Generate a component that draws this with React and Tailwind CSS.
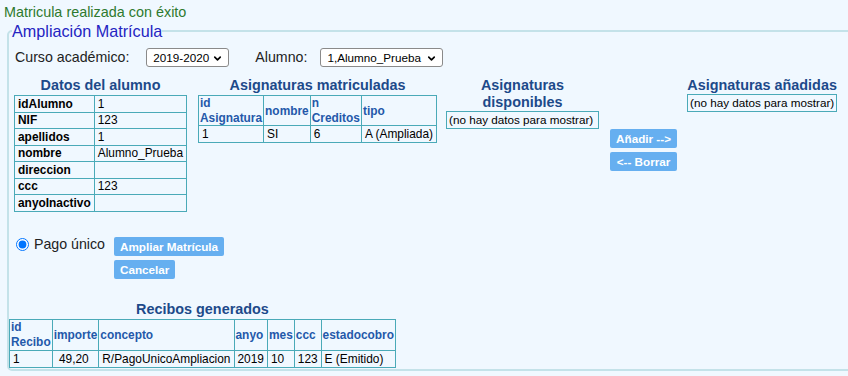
import { ChevronDown } from 'lucide-react';

const th = 'border border-[#4aaab8] px-[1px] py-0 text-left font-bold text-[#2458aa] align-middle';
const td = 'border border-[#4aaab8] px-[3px] py-0 text-left whitespace-nowrap';
const heading = 'text-center font-bold text-[14.4px] leading-[17px] text-[#1d4a8a]';

const Select = ({ value, width }) => (
    <div className={`relative flex items-center h-[19px] bg-white border border-[#8a8a8a] rounded-[3px] text-[11.7px] text-black pl-[6px] ${width}`}>
        <span>{value}</span>
        <ChevronDown size={11} strokeWidth={3.5} className="absolute right-[5px] top-[4px]" />
    </div>
);

const Boton = ({ children, className = '' }) => (
    <button
        type="button"
        className={`h-[19px] bg-[#66aff0] text-white font-bold text-[11.7px] rounded-[2px] px-[6px] leading-[19px] ${className}`}
    >
        {children}
    </button>
);

const alumno = [
    ['idAlumno', '1'],
    ['NIF', '123'],
    ['apellidos', '1'],
    ['nombre', 'Alumno_Prueba'],
    ['direccion', ''],
    ['ccc', '123'],
    ['anyoInactivo', ''],
];

const App = () => {
    return (
        <div className="w-full min-h-screen overflow-hidden bg-[#f0f8ff] font-['Liberation_Sans',Arial,sans-serif] text-[#222]">
            <div className="pl-[4px] pt-[4px] h-[22px] text-[14.4px] leading-[17px] text-[#2e7a2e]">
                Matricula realizada con éxito
            </div>
            <fieldset className="ml-[7px] w-[900px] border-2 border-[#c4e2e9] rounded-[5px] pb-[1px]">
                <legend className="ml-[3px] text-[16.2px] leading-[18px] text-[#2424c2]">Ampliación Matrícula</legend>

                <div className="flex items-center pl-[6px] mt-[7px] text-[14.2px]">
                    <span>Curso académico:</span>
                    <Select value="2019-2020" width="w-[83px] ml-[17px]" />
                    <span className="ml-[26px]">Alumno:</span>
                    <Select value="1,Alumno_Prueba" width="w-[123px] ml-[13px]" />
                </div>

                <div className="flex items-start pl-[5px] mt-[9px] text-[11.9px] leading-[14.5px] text-black">
                    <div className="w-[173px]">
                        <div className={heading}>Datos del alumno</div>
                        <table className="w-full border-collapse mt-[1px]">
                            <tbody>
                                {alumno.map(([k, v]) => (
                                    <tr key={k} className="h-[16.5px]">
                                        <td className={`${td} font-bold w-[82px]`}>{k}</td>
                                        <td className={td}>{v}</td>
                                    </tr>
                                ))}
                            </tbody>
                        </table>
                    </div>

                    <div className="ml-[11px]">
                        <div className={heading}>Asignaturas matriculadas</div>
                        <table className="border-collapse mt-[1px]">
                            <thead>
                                <tr className="h-[30px]">
                                    <th className={th}>id<br />Asignatura</th>
                                    <th className={th}>nombre</th>
                                    <th className={th}>n<br />Creditos</th>
                                    <th className={th}>tipo</th>
                                </tr>
                            </thead>
                            <tbody>
                                <tr className="h-[16.5px]">
                                    <td className={td}>1</td>
                                    <td className={td}>SI</td>
                                    <td className={td}>6</td>
                                    <td className={td}>A (Ampliada)</td>
                                </tr>
                            </tbody>
                        </table>
                    </div>

                    <div className="ml-[9px] w-[153px]">
                        <div className={heading}>Asignaturas<br />disponibles</div>
                        <div className="border border-[#4aaab8] h-[18px] px-[2px] leading-[16px] whitespace-nowrap text-[11.7px]">
                            (no hay datos para mostrar)
                        </div>
                    </div>

                    <div className="ml-[11px] mt-[52px] flex flex-col gap-[4px]">
                        <Boton className="w-[67px] px-0">Añadir --&gt;</Boton>
                        <Boton className="w-[67px] px-0">&lt;-- Borrar</Boton>
                    </div>

                    <div className="ml-[10px]">
                        <div className={`${heading} whitespace-nowrap`}>Asignaturas añadidas</div>
                        <div className="border border-[#4aaab8] h-[18px] px-[2px] leading-[16px] whitespace-nowrap text-[11.7px]">
                            (no hay datos para mostrar)
                        </div>
                    </div>
                </div>

                <div className="flex items-start pl-[7px] mt-[25px]">
                    <label className="flex items-center gap-[5px] text-[14.2px] leading-[17px] mt-[-1px]">
                        <input type="radio" defaultChecked name="pago" className="w-[13px] h-[13px]" />
                        Pago único
                    </label>
                    <div className="ml-[9px] flex flex-col items-start gap-[4px]">
                        <Boton>Ampliar Matrícula</Boton>
                        <Boton>Cancelar</Boton>
                    </div>
                </div>

                <div className="inline-block mt-[22px] text-[11.9px] leading-[14.5px] text-black">
                    <div className={heading}>Recibos generados</div>
                    <table className="border-collapse mt-[1px]">
                        <thead>
                            <tr className="h-[31px]">
                                <th className={th}>id<br />Recibo</th>
                                <th className={th}>importe</th>
                                <th className={th}>concepto</th>
                                <th className={th}>anyo</th>
                                <th className={th}>mes</th>
                                <th className={th}>ccc</th>
                                <th className={th}>estadocobro</th>
                            </tr>
                        </thead>
                        <tbody>
                            <tr className="h-[17px]">
                                <td className={td}>1</td>
                                <td className={td}>&nbsp;49,20</td>
                                <td className={td}>R/PagoUnicoAmpliacion</td>
                                <td className={td}>2019</td>
                                <td className={td}>10</td>
                                <td className={`${td} text-right`}>123</td>
                                <td className={td}>E (Emitido)</td>
                            </tr>
                        </tbody>
                    </table>
                </div>
            </fieldset>
        </div>
    );
};

export default App;
